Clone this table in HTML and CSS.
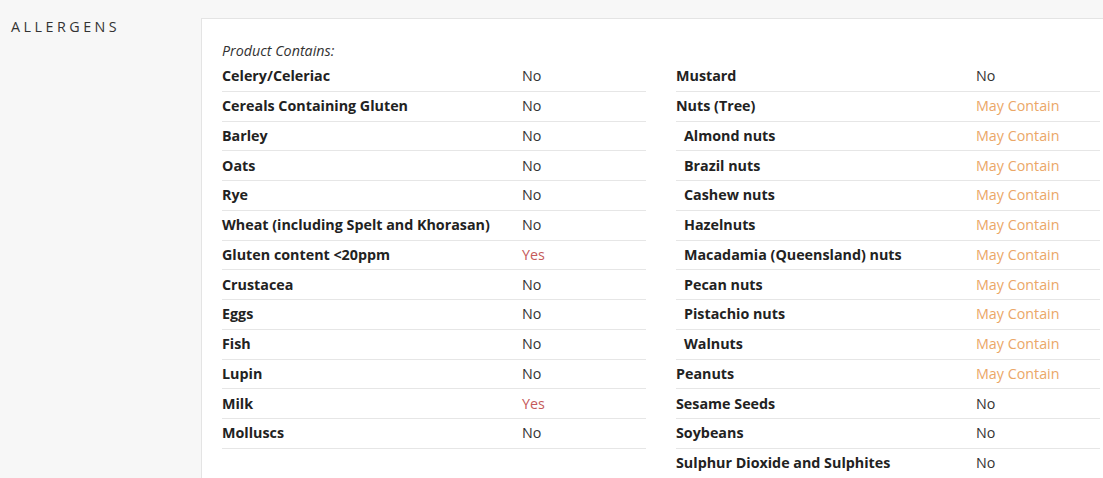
FILE: index.html
```html
<!DOCTYPE html>
<html lang="en">
<head>
<meta charset="utf-8">
<title>Allergens</title>
<link rel="stylesheet" href="styles.css">
</head>
<body>
<div class="page">
  <aside class="side">
    <h2 class="side-title">ALLERGENS</h2>
  </aside>
  <section class="card">
    <p class="intro">Product Contains:</p>
    <div class="cols">
      <div class="col">
        <div class="row"><span class="label">Celery/Celeriac</span><span class="val">No</span></div>
        <div class="row"><span class="label">Cereals Containing Gluten</span><span class="val">No</span></div>
        <div class="row"><span class="label">Barley</span><span class="val">No</span></div>
        <div class="row"><span class="label">Oats</span><span class="val">No</span></div>
        <div class="row"><span class="label">Rye</span><span class="val">No</span></div>
        <div class="row"><span class="label">Wheat (including Spelt and Khorasan)</span><span class="val">No</span></div>
        <div class="row"><span class="label">Gluten content &lt;20ppm</span><span class="val yes">Yes</span></div>
        <div class="row"><span class="label">Crustacea</span><span class="val">No</span></div>
        <div class="row"><span class="label">Eggs</span><span class="val">No</span></div>
        <div class="row"><span class="label">Fish</span><span class="val">No</span></div>
        <div class="row"><span class="label">Lupin</span><span class="val">No</span></div>
        <div class="row"><span class="label">Milk</span><span class="val yes">Yes</span></div>
        <div class="row"><span class="label">Molluscs</span><span class="val">No</span></div>
      </div>
      <div class="col">
        <div class="row"><span class="label">Mustard</span><span class="val">No</span></div>
        <div class="row"><span class="label">Nuts (Tree)</span><span class="val may">May Contain</span></div>
        <div class="row sub"><span class="label">Almond nuts</span><span class="val may">May Contain</span></div>
        <div class="row sub"><span class="label">Brazil nuts</span><span class="val may">May Contain</span></div>
        <div class="row sub"><span class="label">Cashew nuts</span><span class="val may">May Contain</span></div>
        <div class="row sub"><span class="label">Hazelnuts</span><span class="val may">May Contain</span></div>
        <div class="row sub"><span class="label">Macadamia (Queensland) nuts</span><span class="val may">May Contain</span></div>
        <div class="row sub"><span class="label">Pecan nuts</span><span class="val may">May Contain</span></div>
        <div class="row sub"><span class="label">Pistachio nuts</span><span class="val may">May Contain</span></div>
        <div class="row sub"><span class="label">Walnuts</span><span class="val may">May Contain</span></div>
        <div class="row"><span class="label">Peanuts</span><span class="val may">May Contain</span></div>
        <div class="row"><span class="label">Sesame Seeds</span><span class="val">No</span></div>
        <div class="row"><span class="label">Soybeans</span><span class="val">No</span></div>
        <div class="row"><span class="label">Sulphur Dioxide and Sulphites</span><span class="val">No</span></div>
      </div>
    </div>
  </section>
</div>
</body>
</html>
```

FILE: styles.css
```css
html, body {
  margin: 0;
  padding: 0;
  overflow: hidden;
  background: #f7f7f7;
}
body {
  font-family: "Open Sans", "Noto Sans", sans-serif;
  font-size: 14.3px;
  color: #222;
}
.page {
  display: flex;
  align-items: flex-start;
}
.side {
  flex: 0 0 201px;
  padding: 17px 0 0 11px;
  box-sizing: border-box;
}
.side-title {
  margin: 0;
  font-size: 14.3px;
  font-weight: 400;
  letter-spacing: 3.5px;
  color: #333;
  line-height: 20px;
}
.card {
  flex: 0 0 auto;
  margin-top: 18px;
  background: #fff;
  border: 1px solid #e4e4e4;
  padding: 21px 21px 40px 20px;
}
.intro {
  margin: 0;
  font-style: italic;
  line-height: 22px;
  color: #333;
}
.cols {
  display: grid;
  grid-template-columns: 424px 424px;
  column-gap: 30px;
}
.row {
  display: flex;
  line-height: 20px;
  padding: 4.25px 0 4.5px;
  border-bottom: 1px solid #e6e6e6;
}
.label {
  flex: 0 0 300px;
  font-weight: 700;
  color: #222;
}
.sub .label {
  flex-basis: 292px;
  padding-left: 8px;
}
.val {
  color: #333;
}
.val.yes {
  color: #c55a5a;
}
.val.may {
  color: #eba768;
}
```
